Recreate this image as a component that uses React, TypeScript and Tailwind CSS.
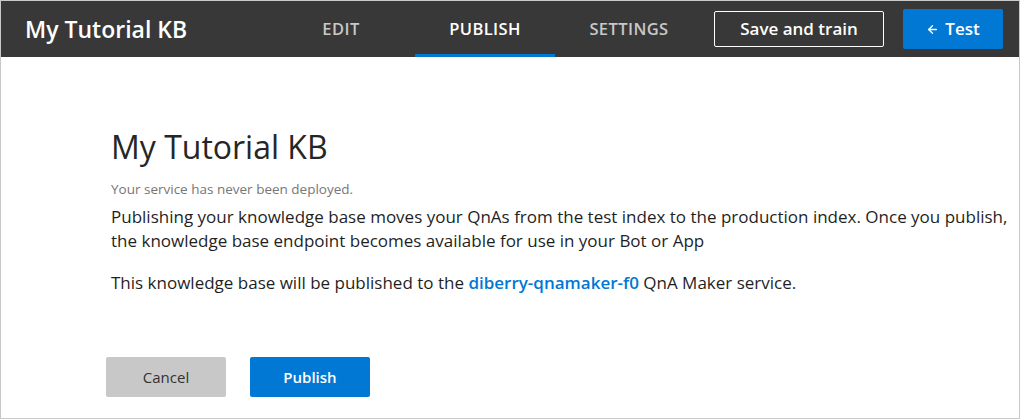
import { ArrowLeft } from "lucide-react";

const font = { fontFamily: '"Segoe UI", "Open Sans", "Liberation Sans", sans-serif' };

function NavTab({ label, active }: { label: string; active?: boolean }) {
	return (
		<div
			className={`flex h-full w-[140px] items-center justify-center border-b-[3px] pt-[3px] text-[16.5px] font-semibold tracking-wide ${
				active ? "border-[#0078d4] text-white" : "border-transparent text-[#c8c8c8]"
			}`}
		>
			{label}
		</div>
	);
}

export default function App() {
	return (
		<div className="h-[419px] w-[1020px] overflow-hidden border border-[#c8c8c8] bg-white" style={font}>
			{/* header */}
			<div className="flex h-[56px] items-center bg-[#383838] pr-[16px]">
				<div className="w-[270px] pl-[24px] text-[23px] font-semibold text-white">My Tutorial KB</div>
				<div className="flex h-full items-stretch">
					<NavTab label="EDIT" />
					<div className="w-[4px]" />
					<NavTab label="PUBLISH" active />
					<div className="w-[4px]" />
					<NavTab label="SETTINGS" />
				</div>
				<div className="ml-auto flex items-center gap-[19px]">
					<button className="h-[36px] w-[170px] rounded-[2px] border border-white text-[17px] font-semibold text-white">
						Save and train
					</button>
					<button className="flex h-[40px] w-[100px] items-center justify-center gap-[6px] rounded-[2px] bg-[#0078d4] text-[17px] font-semibold text-white">
						<ArrowLeft size={13} strokeWidth={2.5} />
						Test
					</button>
				</div>
			</div>

			{/* body */}
			<div className="pl-[110px] pt-[70px] text-[#1f1f1f]">
				<h1 className="text-[32px] leading-[40px] font-normal text-[#262626]">My Tutorial KB</h1>
				<p className="mt-[12px] text-[13.5px] text-[#767676]">Your service has never been deployed.</p>
				<p className="mt-[6px] w-[910px] text-[17px] leading-[24px]">
					Publishing your knowledge base moves your QnAs from the test index to the production index. Once you publish, the knowledge base endpoint becomes available for use in your Bot or App
				</p>
				<p className="mt-[18px] text-[17px] leading-[24px]">
					This knowledge base will be published to the{" "}
					<span className="font-semibold text-[#0078d4]">diberry-qnamaker-f0</span> QnA Maker service.
				</p>
				<div className="-ml-[5px] mt-[62px] flex gap-[24px]">
					<button className="h-[40px] w-[120px] rounded-[2px] bg-[#c8c8c8] text-[15px] text-[#333]">Cancel</button>
					<button className="h-[40px] w-[120px] rounded-[2px] bg-[#0078d4] text-[15px] font-semibold text-white">
						Publish
					</button>
				</div>
			</div>
		</div>
	);
}
